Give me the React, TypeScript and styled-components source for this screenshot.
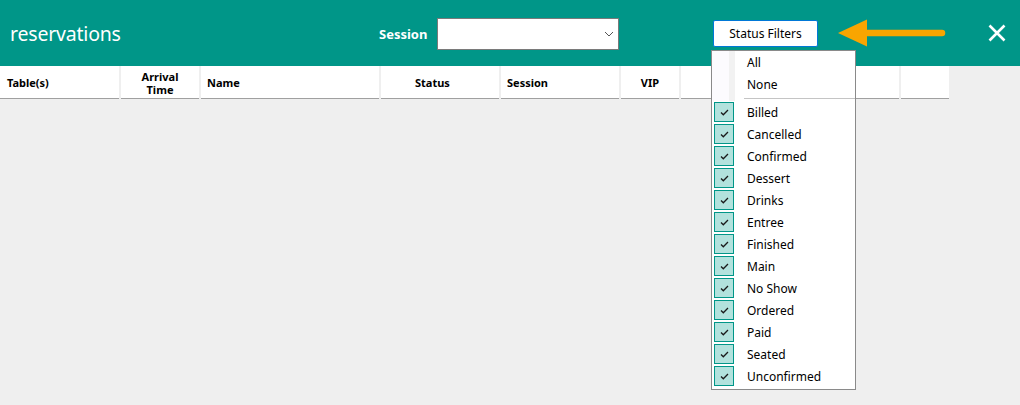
import React from "react";
import styled, { createGlobalStyle } from "styled-components";

const GlobalStyle = createGlobalStyle`
  html, body { margin: 0; padding: 0; }
  body {
    background: #efefef;
    font-family: "Noto Sans", "Open Sans", sans-serif;
    width: 1020px;
    height: 405px;
    overflow: hidden;
  }
  * { box-sizing: border-box; }
`;

const Page = styled.div`
  position: relative;
  width: 1020px;
  height: 405px;
`;

const Header = styled.header`
  display: flex;
  align-items: center;
  height: 66px;
  background: #009688;
  padding-left: 10px;
`;

const Title = styled.h1`
  flex: 0 0 369px;
  margin: 0;
  font-size: 19.5px;
  font-weight: 400;
  color: #fff;
  letter-spacing: -0.2px;
`;

const Label = styled.span`
  font-size: 13px;
  font-weight: 700;
  color: #fff;
  width: 46px;
  margin-right: 12px;
  margin-top: 2px;
`;

const Select = styled.div`
  width: 182px;
  height: 32px;
  margin-top: 2px;
  background: #fff;
  border: 1px solid #7a7a7a;
  display: flex;
  align-items: center;
  justify-content: flex-end;
  padding-right: 4px;
`;

const FilterButton = styled.button`
  margin-left: 94px;
  width: 105px;
  height: 27px;
  background: #fff;
  border: 1px solid #0078d7;
  border-radius: 2px;
  font-family: inherit;
  font-size: 12px;
  color: #000;
  padding: 0;
`;

const Arrow = styled.svg`
  margin-left: 20px;
  display: block;
`;

const Close = styled.svg`
  margin-left: 42px;
  display: block;
`;

const HeadRow = styled.div`
  display: grid;
  grid-template-columns: 119px 78px 178px 118px 118px 58px 218px 48px;
  column-gap: 2px;
`;

const HeadCell = styled.div<{ $align?: "left" | "center"; $pad?: number }>`
  height: 33px;
  background: #fff;
  border-bottom: 1px solid #a0a0a0;
  display: flex;
  align-items: center;
  justify-content: ${(p) => (p.$align === "center" ? "center" : "flex-start")};
  text-align: ${(p) => (p.$align === "center" ? "center" : "left")};
  padding-left: ${(p) => p.$pad ?? 0}px;
  padding-top: 1px;
  font-size: 11px;
  font-weight: 700;
  line-height: 13px;
  color: #000;
`;

const Menu = styled.div`
  position: absolute;
  left: 711px;
  top: 50px;
  width: 145px;
  height: 340px;
  background: #fff;
  border: 1px solid #8a8a8a;
`;

const MenuItem = styled.div<{ $plain?: boolean }>`
  display: flex;
  align-items: center;
  height: 22px;
  padding-left: 2px;
  font-size: 12px;
  color: #000;
  background: ${(p) =>
    p.$plain
      ? "linear-gradient(to right, #fcfbfe 0, #fcfbfe 17px, #f2f2f2 17px, #f2f2f2 23px, #fff 23px)"
      : "#fff"};
`;

const Separator = styled.div`
  height: 6px;
  display: flex;
  align-items: center;
  padding-left: 32px;
  background: linear-gradient(to right, #fcfbfe 0, #fcfbfe 17px, #f2f2f2 17px, #f2f2f2 23px, #fff 23px);
  &::after {
    content: "";
    display: block;
    flex: 1;
    height: 1px;
    background: #c4c4c4;
  }
`;

const CheckBox = styled.span`
  width: 20px;
  height: 20px;
  background: #b2e2dd;
  border: 1px solid #009688;
  display: flex;
  align-items: center;
  justify-content: center;
`;

const Spacer = styled.span`
  width: 20px;
`;

const ItemText = styled.span`
  margin-left: 13px;
`;

const statuses = [
  "Billed",
  "Cancelled",
  "Confirmed",
  "Dessert",
  "Drinks",
  "Entree",
  "Finished",
  "Main",
  "No Show",
  "Ordered",
  "Paid",
  "Seated",
  "Unconfirmed",
];

export default function App() {
  return (
    <Page>
      <GlobalStyle />
      <Header>
        <Title>reservations</Title>
        <Label>Session</Label>
        <Select>
          <svg width="10" height="6" viewBox="0 0 10 6">
            <path d="M1 1 L5 5 L9 1" fill="none" stroke="#555" strokeWidth="1" />
          </svg>
        </Select>
        <FilterButton>Status Filters</FilterButton>
        <Arrow width="108" height="28" viewBox="0 0 108 28">
          <polygon points="0,14 29,0.5 29,27.5" fill="#f9a500" />
          <line x1="28" y1="14" x2="104" y2="14" stroke="#f9a500" strokeWidth="6.5" strokeLinecap="round" />
        </Arrow>
        <Close width="18" height="18" viewBox="0 0 18 18">
          <path d="M1.5 1.5 L16.5 16.5 M16.5 1.5 L1.5 16.5" stroke="#fff" strokeWidth="2.6" />
        </Close>
      </Header>
      <HeadRow>
        <HeadCell $pad={7}>Table(s)</HeadCell>
        <HeadCell $align="center">
          Arrival
          <br />
          Time
        </HeadCell>
        <HeadCell $pad={6}>Name</HeadCell>
        <HeadCell $pad={34}>Status</HeadCell>
        <HeadCell $pad={6}>Session</HeadCell>
        <HeadCell $align="center">VIP</HeadCell>
        <HeadCell />
        <HeadCell />
      </HeadRow>
      <Menu>
        <MenuItem $plain>
          <Spacer />
          <ItemText>All</ItemText>
        </MenuItem>
        <MenuItem $plain>
          <Spacer />
          <ItemText>None</ItemText>
        </MenuItem>
        <Separator />
        {statuses.map((s) => (
          <MenuItem key={s}>
            <CheckBox>
              <svg width="9" height="7" viewBox="0 0 9 7">
                <path d="M1 3.5 L3.3 5.8 L8 1" fill="none" stroke="#1a1a1a" strokeWidth="1.3" />
              </svg>
            </CheckBox>
            <ItemText>{s}</ItemText>
          </MenuItem>
        ))}
      </Menu>
    </Page>
  );
}
